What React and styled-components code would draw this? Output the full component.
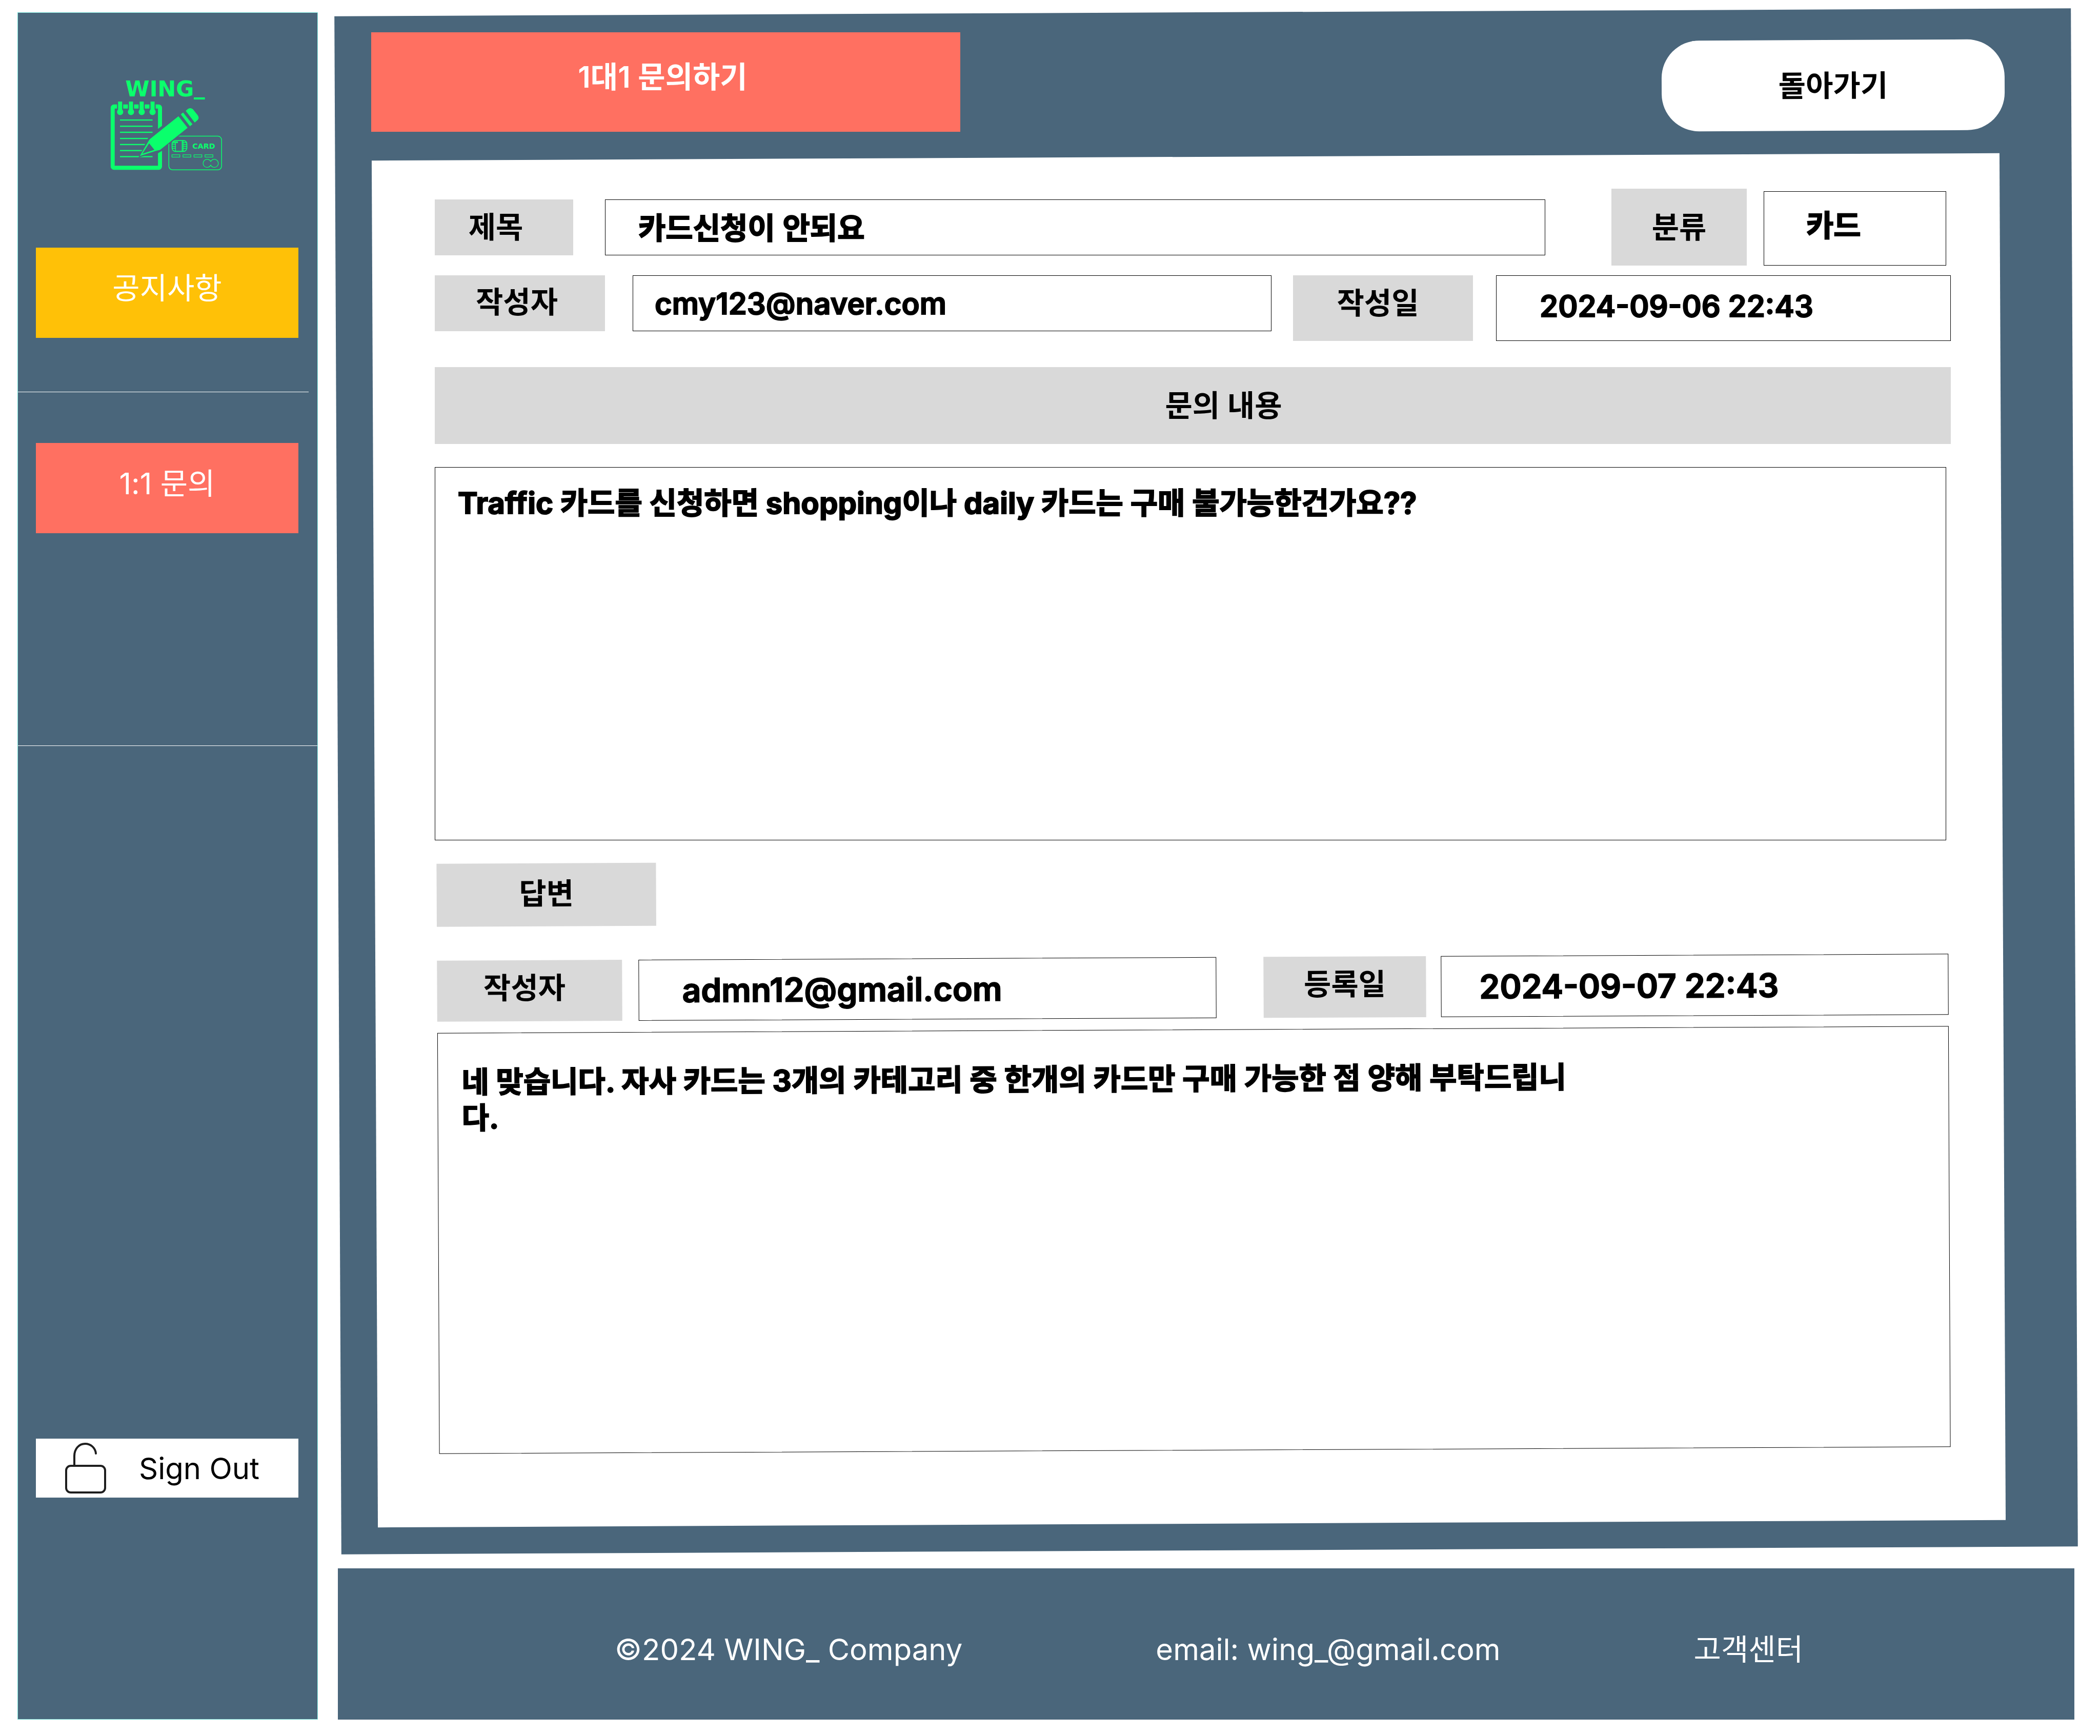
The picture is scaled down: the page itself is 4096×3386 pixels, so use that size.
import React from "react";
import styled, { createGlobalStyle } from "styled-components";

const slate = "#4a667b";
const coral = "#ff7061";
const amber = "#ffc107";
const grey = "#d9d9d9";
const green = "#0aff6c";
const tilt = "rotate(-0.26deg)";

const GlobalStyle = createGlobalStyle`
  *, *::before, *::after { box-sizing: border-box; }
  body {
    margin: 0;
    background: #ffffff;
    color: #000000;
    font-family: Inter, "Noto Sans CJK KR", sans-serif;
    font-size: 58px;
    line-height: 70px;
  }
  a { color: inherit; text-decoration: none; }
  button, input, textarea { font: inherit; color: inherit; }
`;

const Page = styled.div`
  display: grid;
  grid-template-columns: 586px minmax(0, 1fr);
  column-gap: 39px;
  min-height: 100vh;
  padding: 24px 50px 32px 34px;
`;

const Sidebar = styled.aside`
  display: flex;
  flex-direction: column;
  padding-bottom: 432px;
  background: ${slate};
  border: 1px solid #7fe8de;
`;

const Logo = styled.svg`
  display: block;
  width: 291px;
  height: 236px;
  margin: 102px 0 120px 147px;
`;

const NavLink = styled.a`
  display: flex;
  justify-content: center;
  height: 176px;
  margin: 0 37px 0 35px;
  padding-top: 44px;
  background: ${(p) => p.$color};
  color: #ffffff;
`;

const Divider = styled.hr`
  margin: ${(p) => p.$margin};
  border: 0;
  border-top: 1px solid #ffffff;
`;

const SignOut = styled.button`
  display: flex;
  align-items: center;
  gap: 63px;
  height: 115px;
  margin: auto 37px 0 35px;
  padding: 0 56px;
  border: 0;
  background: #ffffff;
`;

const LockIcon = styled.svg`
  flex: none;
  width: 82px;
  height: 100px;
`;

const Column = styled.div`
  display: flex;
  flex-direction: column;
  gap: 35px;
  min-width: 0;
`;

const Panel = styled.main`
  position: relative;
  z-index: 0;
  flex: 1;
  display: flex;
  flex-direction: column;
  gap: 49px;
  padding: 39px 140px 52px 72px;

  &::before {
    content: "";
    position: absolute;
    inset: 0;
    z-index: -1;
    background: ${slate};
    transform: ${tilt};
  }
`;

const PanelHeader = styled.header`
  display: flex;
  justify-content: space-between;
  align-items: flex-end;
  margin: 0 -4px 0 -7px;
`;

const PageTitle = styled.h1`
  width: 1149px;
  height: 194px;
  margin: 0;
  padding: 52px 12px 0 0;
  background: ${coral};
  color: #ffffff;
  font-size: 58px;
  font-weight: 600;
  text-align: center;
`;

const BackButton = styled.button`
  width: 669px;
  height: 177px;
  margin-bottom: 2px;
  border: 0;
  border-radius: 73px;
  background: #ffffff;
  font-weight: 600;
  transform: ${tilt};
`;

const Card = styled.section`
  position: relative;
  z-index: 0;
  flex: 1;
  display: flex;
  flex-direction: column;
  padding: 62px 101px 0 117px;

  &::before {
    content: "";
    position: absolute;
    inset: 0;
    z-index: -1;
    background: #ffffff;
    transform: ${tilt};
  }
`;

const Row = styled.div`
  display: flex;
  align-items: ${(p) => p.$align || "flex-start"};
  margin-bottom: ${(p) => p.$after}px;
`;

const Label = styled.label`
  flex: none;
  display: flex;
  align-items: center;
  justify-content: center;
  width: ${(p) => p.$width}px;
  height: ${(p) => p.$height}px;
  padding: ${(p) => p.$pad || "0"};
  background: ${grey};
  font-weight: 600;
`;

const Banner = styled.label`
  display: flex;
  align-items: center;
  justify-content: center;
  height: 150px;
  margin-bottom: 45px;
  padding-left: 120px;
  background: ${grey};
  font-weight: 600;
`;

const Field = styled.input`
  flex: ${(p) => (p.$width ? "none" : "1")};
  width: ${(p) => (p.$width ? p.$width + "px" : "auto")};
  min-width: 0;
  height: ${(p) => p.$height}px;
  margin: ${(p) => p.$margin || "0"};
  padding: ${(p) => p.$pad};
  border: 1px solid #000000;
  border-radius: 0;
  outline: 0;
  background: transparent;
  font-size: ${(p) => (p.$large ? 64 : 58)}px;
  font-weight: 600;
  -webkit-text-stroke: 2px #000000;
`;

const TextBox = styled.textarea`
  display: block;
  width: 100%;
  height: ${(p) => p.$height}px;
  padding: ${(p) => p.$pad};
  border: 1px solid #000000;
  border-radius: 0;
  outline: 0;
  resize: none;
  overflow: hidden;
  background: transparent;
  font-weight: 700;
  -webkit-text-stroke: 2px #000000;
`;

const Question = styled.div`
  padding-right: 9px;
  margin-bottom: 39px;
`;

const Reply = styled.section`
  padding: 0 3px 0 6px;
  transform: ${tilt};
`;

const Footer = styled.footer`
  display: flex;
  align-items: center;
  gap: 377px;
  height: 295px;
  padding: 20px 0 0 540px;
  background: ${slate};
  color: #ffffff;
`;

function WingLogo() {
  const rings = [172, 242, 311, 381];
  const lines = [354, 394, 433, 473, 512, 551, 590];
  return (
    <Logo viewBox="0 0 960 780" role="img" aria-label="WING_ CARD">
      <text x="206" y="202" fontFamily="DejaVu Sans" fontWeight="700" fontSize="141" fill={green}>
        WING<tspan dy="-12">_</tspan>
      </text>
      <rect x="124" y="267" width="305" height="395" rx="8" fill="none" stroke={green} strokeWidth="26" />
      {rings.map((x) => (
        <g key={x}>
          <rect x={x - 20} y="230" width="40" height="60" fill={slate} />
          <rect x={x - 13} y="235" width="26" height="60" fill={green} />
          <circle cx={x} cy="302" r="20" fill={green} />
        </g>
      ))}
      {lines.map((y) => (
        <rect key={y} x="171" y={y - 4} width="210" height="8" fill={green} />
      ))}
      <rect x="486" y="458" width="340" height="217" rx="24" fill="none" stroke={green} strokeWidth="5" />
      <path d="M410 416 L446 388 V550 L410 572 Z" fill={slate} />
      <path d="M352 470 L548 322 L616 408 L490 505 L420 560 L290 596 Z" fill={slate} />
      <path d="M548 330 L607 404 L430 546 L400 554 L299 586 L362 478 Z" fill={green} />
      <path d="M359 504 L393 546 L315 572 Z" fill={slate} />
      <path d="M563 317 L578 306 L638 381 L622 394 Z" fill={green} />
      <path d="M595 295 L608 283 Q624 271 641 284 L672 323 Q684 340 672 354 L653 370 Z" fill={green} />
      <rect x="507" y="486" width="95" height="70" rx="22" fill="none" stroke={green} strokeWidth="6" />
      <path d="M529 500 V556 M572 486 V556 M578 486 V556 M507 500 H540 M507 510 H529 M507 524 H529 M507 536 H529 M578 500 H602 M578 512 H602 M578 524 H602 M578 537 H602 M515 494 H542 V502" fill="none" stroke={green} strokeWidth="5" />
      <text x="638" y="538" fontFamily="DejaVu Sans" fontWeight="700" fontSize="47" fill={green}>CARD</text>
      {[506, 577, 648, 719].map((x) => (
        <rect key={x} x={x} y="578" width="51" height="15" fill="none" stroke={green} strokeWidth="4" />
      ))}
      <path d="M756 621 A26 26 0 1 0 756 645 A26 26 0 1 0 756 621 Z" fill="none" stroke={green} strokeWidth="4" />
    </Logo>
  );
}

function OpenLock() {
  return (
    <LockIcon viewBox="0 0 82 100" fill="none" stroke="#1e1e1e" strokeWidth="4" strokeLinecap="round" aria-hidden="true">
      <rect x="3" y="45" width="76" height="52" rx="9" />
      <path d="M19 45 V26 C19 12 28 2 40 2 C51 2 60 10 61 21" />
    </LockIcon>
  );
}

export default function App() {
  return (
    <>
      <GlobalStyle />
      <Page>
        <Sidebar>
          <WingLogo />
          <NavLink href="#notice" $color={amber}>공지사항</NavLink>
          <Divider $margin="105px 17px 99px 0" />
          <NavLink href="#inquiry" $color={coral}>1:1 문의</NavLink>
          <Divider $margin="414px 0 0" />
          <SignOut type="button">
            <OpenLock />
            Sign Out
          </SignOut>
        </Sidebar>

        <Column>
          <Panel>
            <PanelHeader>
              <PageTitle>1대1 문의하기</PageTitle>
              <BackButton type="button">돌아가기</BackButton>
            </PanelHeader>

            <Card>
              <Row $align="center" $after={19}>
                <Label htmlFor="subject" $width={270} $height={109} $pad="0 32px 0 0">제목</Label>
                <Field id="subject" readOnly value="카드신청이 안되요" $height={109} $margin="0 129px 0 62px" $pad="0 64px 4px" />
                <Label htmlFor="category" $width={264} $height={150}>분류</Label>
                <Field id="category" readOnly value="카드" $width={356} $height={145} $margin="5px 9px 0 33px" $pad="0 0 20px 82px" />
              </Row>
              <Row $after={51}>
                <Label htmlFor="author" $width={332} $height={109} $pad="0 12px 6px 0">작성자</Label>
                <Field id="author" readOnly value="cmy123@naver.com" $height={109} $margin="0 42px 0 54px" $pad="0 42px" />
                <Label htmlFor="written" $width={351} $height={128} $pad="0 20px 20px 0">작성일</Label>
                <Field id="written" readOnly value="2024-09-06 22:43" $width={887} $height={128} $margin="0 0 0 45px" $pad="0 0 8px 84px" />
              </Row>
              <Banner htmlFor="question">문의 내용</Banner>
              <Question>
                <TextBox
                  id="question"
                  readOnly
                  $height={728}
                  $pad="34px 44px"
                  value="Traffic 카드를 신청하면 shopping이나 daily 카드는 구매 불가능한건가요??"
                />
              </Question>

              <Reply>
                <Row $after={66}>
                  <Label htmlFor="answer" $width={428} $height={123} $pad="0 0 6px 0">답변</Label>
                </Row>
                <Row $after={22}>
                  <Label htmlFor="replier" $width={361} $height={119} $pad="0 20px 12px 0">작성자</Label>
                  <Field id="replier" readOnly value="admn12@gmail.com" $large $height={119} $margin="0 92px 0 32px" $pad="0 84px" />
                  <Label htmlFor="replied" $width={317} $height={119} $pad="0 0 12px 0">등록일</Label>
                  <Field id="replied" readOnly value="2024-09-07 22:43" $large $width={990} $height={119} $margin="0 0 0 29px" $pad="0 0 0 74px" />
                </Row>
                <TextBox
                  id="answer"
                  readOnly
                  $height={821}
                  $pad="60px 712px 0 46px"
                  value="네 맞습니다. 자사 카드는 3개의 카테고리 중 한개의 카드만 구매 가능한 점 양해 부탁드립니다."
                />
              </Reply>
            </Card>
          </Panel>

          <Footer>
            <span>©2024 WING_ Company</span>
            <a href="mailto:wing_@gmail.com">email: wing_@gmail.com</a>
            <a href="#support">고객센터</a>
          </Footer>
        </Column>
      </Page>
    </>
  );
}
